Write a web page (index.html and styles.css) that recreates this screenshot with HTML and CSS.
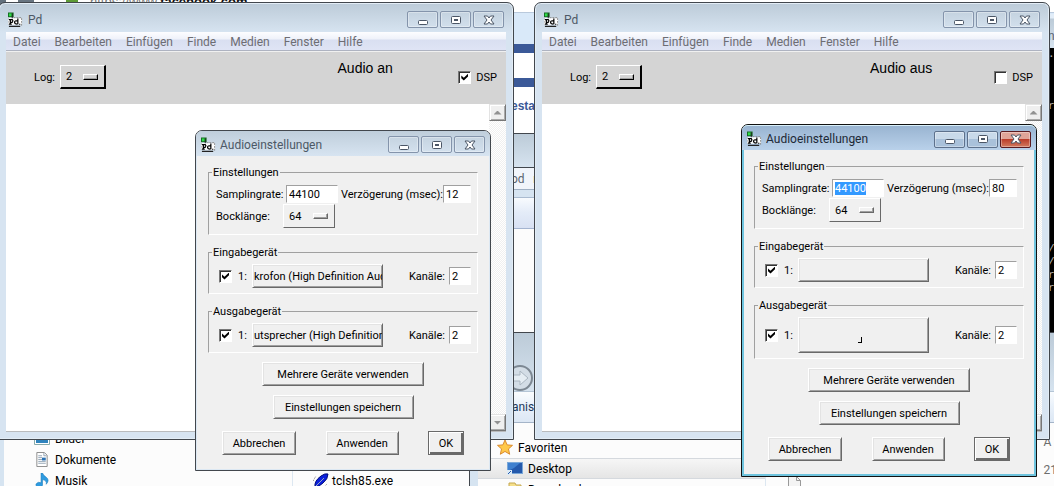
FILE: index.html
```html
<!DOCTYPE html>
<html lang="de">
<head>
<meta charset="utf-8">
<title>Pd – Audioeinstellungen</title>
<link rel="stylesheet" href="styles.css">
</head>
<body>
<svg class="defs" aria-hidden="true">
  <symbol id="pd" viewBox="0 0 16 16">
    <path d="M0 6h15v7H0z" fill="#fff"/><path d="M0 6v7M6 5.500h9M14.500 6v8" fill="none" stroke="#888" stroke-dasharray="2 1"/>
    <path d="M0 0h6v5H0z" fill="#176b22"/><path d="M1 1h3v3H1z" fill="#2fdc48"/>
    <path d="M4 1h1v5H4zM1 14h12v1.500H1z" fill="#222"/>
    <path d="M1 7.500h3.500q1.500 1.500 0 3H2.500M2.500 7.500v5M1 12.500h3M10.500 6.500v6M10 9q-3-.5-3 1.500t3 2M12.500 12v1" fill="none" stroke="#000" stroke-width="1.300"/>
  </symbol>
  <symbol id="min" viewBox="0 0 12 10"><rect x="1.500" y="5.500" width="9" height="4" rx="1" fill="#fff" stroke="#4b5666"/></symbol>
  <symbol id="max" viewBox="0 0 12 10"><rect x="1.500" y="1.500" width="9" height="7" rx="1" fill="#fff" stroke="#4b5666"/><rect x="4.500" y="4.500" width="3" height="1" fill="#ccd5df" stroke="#4b5666"/></symbol>
  <symbol id="close" viewBox="0 0 12 10"><path d="M1 1h3.500L6 3l1.500-2H11L8 5l3 4H7.500L6 7 4.500 9H1l3-4z" fill="#fff" stroke="#4b5666"/></symbol>
</svg>

<main class="desktop">
  <div class="browser">
    <div class="tabstrip"><span>https://www.</span><b>facebook.com</b></div>
    <div class="chrome"></div>
    <div class="brand"></div>
    <div class="page-gap"></div>
    <div class="brand"></div>
    <p class="page-text">esta</p>
  </div>
  <div class="back notes">
    <div class="back-title"></div>
    <div class="back-menu">od&nbsp;&nbsp; <b>n</b></div>
    <div class="back-bar"></div>
  </div>
  <div class="console"><div class="console-title">n</div><pre class="console-text">.-



r










/
/
r
r</pre></div>
  <div class="back explorer-right">
    <div class="back-title nav"><svg class="forward" viewBox="0 0 26 26"><circle cx="13" cy="13" r="12" fill="#d3dde6" stroke="#7d8893" stroke-width="2"/><path d="M4 10h9V6l8 7-8 7v-4H4z" fill="#e5edf3" stroke="#aab6c1"/></svg></div>
    <div class="organise">Organisieren</div>
    <div class="folder-view">
      <ul class="tree">
        <li><svg class="star" viewBox="0 0 16 16"><path d="M8 0l2.300 5.200 5.700.5-4.300 3.800 1.300 5.700L8 12.200 3 15.200l1.300-5.700L0 5.700l5.700-.5z" fill="#ffc84a" stroke="#d7862a"/></svg>Favoriten</li>
        <li class="chosen"><svg viewBox="0 0 16 13"><path d="M0 0h16v12H0z" fill="#79a7d8"/><path d="M1 1h14v10H1z" fill="#2459ac"/><path d="M1 1h12L7 6 1 9z" fill="#3f80cf"/><path d="M0 8h5v5H0z" fill="#dceaf5"/><path d="M1 12l3-3" stroke="#2459ac"/></svg>Desktop</li>
        <li class="deep"><svg viewBox="0 0 16 13"><path d="M2 0h6l1 2h5v11H2z" fill="#f5df8a" stroke="#c5a850"/></svg>Downloads</li>
      </ul>
      <div class="files"><svg class="sheet" viewBox="0 0 13 16"><path d="M.5.500h8l4 4v11H.500z" fill="#f4f4f4" stroke="#999"/><path d="M8.500.500v4h4" fill="none" stroke="#999"/></svg><p class="dates">Ä<br>21</p></div>
    </div>
  </div>
  <div class="explorer-left">
    <ul class="tree">
      <li><svg viewBox="0 0 16 13"><path d="M.5.500h15v12H.500z" fill="#fff" stroke="#8aa"/><path d="M2 2h12v9H2z" fill="#2f83bd"/></svg>Bilder</li>
      <li><svg viewBox="0 0 14 16"><path d="M1.500.500h8l3 3v12h-11z" fill="#fff" stroke="#888"/><path d="M9 1v3h3M3 4h4M3 6h4M3 8h4M3 10h8M3 12h8" fill="none" stroke="#91a3b3"/><path d="M7 6h4v3H7z" fill="#2a72b5"/></svg>Dokumente</li>
      <li><svg viewBox="0 0 14 16"><path d="M6 0h1.500q1 3 4 4.500 4 3 0 7.500 1-4-4-5v6a3.500 2.500 0 1 1-1.500-2.500z" fill="#2e9be0" stroke="#1677b8" stroke-width=".6"/></svg>Musik</li>
    </ul>
    <div class="files"><p class="file"><svg viewBox="0 0 16 16"><path d="M2 14Q1 8 8 3q4-3 7-2 0 5-5 9-4 4-8 4z" fill="#0b20dc" stroke="#000b78"/><path d="M1 15L11 5" stroke="#9ab"/><path d="M0 8l3-5M10 15l4-4" stroke="#777" stroke-dasharray="1 1"/></svg>tclsh85.exe</p></div>
  </div>

  <section class="window main-window first">
    <header class="titlebar"><svg class="app-icon"><use href="#pd"/></svg><h1>Pd</h1>
      <div class="caption-buttons"><button aria-label="Minimieren"><svg><use href="#min"/></svg></button><button aria-label="Maximieren"><svg><use href="#max"/></svg></button><button aria-label="Schließen"><svg><use href="#close"/></svg></button></div></header>
    <nav class="menubar"><button>Datei</button><button>Bearbeiten</button><button>Einfügen</button><button>Finde</button><button>Medien</button><button>Fenster</button><button>Hilfe</button></nav>
    <div class="toolbar">
      <label for="log1">Log:</label><span class="option"><select id="log1"><option>2</option></select><i class="knob"></i></span>
      <output class="status">Audio an</output>
      <label class="dsp"><input type="checkbox" checked>DSP</label>
    </div>
    <div class="console-area"><div class="scrollbar"><button aria-label="Nach oben"><i class="up"></i></button><button aria-label="Nach unten"><i class="down"></i></button></div></div>
  </section>

  <section class="window main-window second">
    <header class="titlebar"><svg class="app-icon"><use href="#pd"/></svg><h1>Pd</h1>
      <div class="caption-buttons"><button aria-label="Minimieren"><svg><use href="#min"/></svg></button><button aria-label="Maximieren"><svg><use href="#max"/></svg></button><button aria-label="Schließen"><svg><use href="#close"/></svg></button></div></header>
    <nav class="menubar"><button>Datei</button><button>Bearbeiten</button><button>Einfügen</button><button>Finde</button><button>Medien</button><button>Fenster</button><button>Hilfe</button></nav>
    <div class="toolbar">
      <label for="log2">Log:</label><span class="option"><select id="log2"><option>2</option></select><i class="knob"></i></span>
      <output class="status">Audio aus</output>
      <label class="dsp"><input type="checkbox">DSP</label>
    </div>
    <div class="console-area"><div class="scrollbar"><button aria-label="Nach oben"><i class="up"></i></button><button aria-label="Nach unten"><i class="down"></i></button></div></div>
  </section>

  <section class="window dialog inactive">
    <header class="titlebar"><svg class="app-icon"><use href="#pd"/></svg><h2>Audioeinstellungen</h2>
      <div class="caption-buttons"><button aria-label="Minimieren"><svg><use href="#min"/></svg></button><button aria-label="Maximieren"><svg><use href="#max"/></svg></button><button aria-label="Schließen"><svg><use href="#close"/></svg></button></div></header>
    <form class="settings">
      <fieldset><legend>Einstellungen</legend>
        <div class="row"><label class="key" for="rate1">Samplingrate:</label><input class="rate" id="rate1" value="44100"><label class="delay-label" for="delay1">Verzögerung (msec):</label><input class="delay" id="delay1" value="12"></div>
        <div class="row block"><label class="key" for="block1">Bocklänge:</label><span class="option"><select id="block1"><option>64</option></select><i class="knob"></i></span></div>
      </fieldset>
      <fieldset><legend>Eingabegerät</legend>
        <div class="row device"><label class="pick"><input type="checkbox" checked>1:</label><button type="button" class="button source">krofon (High Definition Aud</button><label class="channels">Kanäle:<input value="2"></label></div>
      </fieldset>
      <fieldset><legend>Ausgabegerät</legend>
        <div class="row device"><label class="pick"><input type="checkbox" checked>1:</label><button type="button" class="button source">utsprecher (High Definition</button><label class="channels">Kanäle:<input value="2"></label></div>
      </fieldset>
      <button type="button" class="button more">Mehrere Geräte verwenden</button>
      <button type="button" class="button save">Einstellungen speichern</button>
      <div class="actions"><button type="button" class="button">Abbrechen</button><button type="button" class="button">Anwenden</button><button type="button" class="button ok">OK</button></div>
    </form>
  </section>

  <section class="window dialog active">
    <header class="titlebar"><svg class="app-icon"><use href="#pd"/></svg><h2>Audioeinstellungen</h2>
      <div class="caption-buttons"><button aria-label="Minimieren"><svg><use href="#min"/></svg></button><button aria-label="Maximieren"><svg><use href="#max"/></svg></button><button class="danger" aria-label="Schließen"><svg><use href="#close"/></svg></button></div></header>
    <form class="settings">
      <fieldset><legend>Einstellungen</legend>
        <div class="row"><label class="key" for="rate2">Samplingrate:</label><input class="rate" id="rate2" value="44100"><label class="delay-label" for="delay2">Verzögerung (msec):</label><input class="delay" id="delay2" value="80"></div>
        <div class="row block"><label class="key" for="block2">Bocklänge:</label><span class="option"><select id="block2"><option>64</option></select><i class="knob"></i></span></div>
      </fieldset>
      <fieldset><legend>Eingabegerät</legend>
        <div class="row device"><label class="pick"><input type="checkbox" checked>1:</label><button type="button" class="button source" aria-label="Eingabegerät wählen"></button><label class="channels">Kanäle:<input value="2"></label></div>
      </fieldset>
      <fieldset><legend>Ausgabegerät</legend>
        <div class="row device"><label class="pick"><input type="checkbox" checked>1:</label><button type="button" class="button source tall" aria-label="Ausgabegerät wählen"><i class="corner"></i></button><label class="channels">Kanäle:<input value="2"></label></div>
      </fieldset>
      <button type="button" class="button more">Mehrere Geräte verwenden</button>
      <button type="button" class="button save">Einstellungen speichern</button>
      <div class="actions"><button type="button" class="button">Abbrechen</button><button type="button" class="button">Anwenden</button><button type="button" class="button ok">OK</button></div>
    </form>
  </section>
</main>
<script src="script.js"></script>
</body>
</html>
```
FILE: styles.css
```css
* { box-sizing: border-box; }
body { margin: 0; font: 11px/13px Roboto, "Noto Sans", sans-serif; color: #000; }
button, input, select { font: inherit; color: inherit; margin: 0; border-radius: 0; outline: 0; }
h1, h2, p, ul, pre { margin: 0; padding: 0; font: inherit; }
ul { list-style: none; }
.defs { display: none; }
.desktop { position: relative; min-height: 100vh; overflow: hidden; background: #fcfcfc; }

/* Windows behind */
.browser { position: absolute; inset: 0 0 auto 0; height: 134px; background: #fff; }
.tabstrip { height: 12px; padding-left: 90px; font: 13px/4px "Liberation Sans", sans-serif; color: #777; background: linear-gradient(90deg, #63717e 6px, transparent 6px 18px, #687581 18px 34px, transparent 34px 66px, #5d9b35 66px 78px, transparent 78px); }
.tabstrip b { color: #111; }
.chrome { height: 32px; background: #d9e9f9; border-top: 1px solid #b9c9dc; }
.brand { height: 9px; background: #3b5998; }
.page-gap { height: 25px; }
.page-text { padding: 12px 0 0 511px; font: bold 12px/14px "Liberation Sans", sans-serif; color: #3b5998; }
.back { position: absolute; border: 1px solid #42474d; background: #fcfcfc; }
.back-title { height: 34px; background: linear-gradient(#bccbd8, #d6e3ef); border-bottom: 1px solid #42474d; }
.notes { left: 400px; top: 133px; width: 200px; height: 210px; }
.back-menu { height: 22px; padding-left: 110px; font-size: 12px; line-height: 22px; color: #5b6571; background: #f1f5fb; border-bottom: 1px solid #9fb0c4; }
.back-menu b { color: #111; }
.back-bar { height: 39px; border-bottom: 1px solid #a4b4d0; background: linear-gradient(#d6e4f1 7px, #aabbd0 7px 8px, #f8fbfe 8px, #e4ecf8 22px, #d8e1f3); }
.console { position: absolute; right: 0; top: 14px; width: 20px; height: 320px; background: #000; }
.console-title { height: 34px; padding: 16px 0 0 14px; font-size: 12px; color: #5b6571; background: linear-gradient(#e2edf8 4px, #bccbd8 5px, #d6e3ef); }
.console-text { padding-left: 14px; font: 11px/13px "Liberation Mono", monospace; color: #bbb; }
.explorer-right { left: 470px; right: -8px; top: 332px; bottom: -8px; display: flex; flex-direction: column; border-left: 8px solid #d6e4f1; }
.nav { height: 64px; padding: 32px 0 0 29px; border-bottom: 1px solid #b4c5d6; }
.forward { width: 26px; height: 26px; display: block; }
.organise { height: 31px; padding-left: 15px; font-size: 12px; line-height: 30px; color: #1e395b; background: linear-gradient(#fafcfe, #e9f1fa 14px, #dce7f4); border-bottom: 1px solid #a4b4c8; }
.folder-view { flex: 1; display: grid; grid-template-columns: 287px 1fr; }
.tree { font-size: 12px; line-height: 20px; }
.tree li { display: flex; align-items: center; gap: 5px; height: 21px; white-space: nowrap; }
.tree svg { width: 16px; height: 15px; flex: none; }
.explorer-right .tree { padding-top: 9px; }
.explorer-right .tree li { padding-left: 19px; }
.explorer-right .tree li.chosen { padding-left: 29px; background: linear-gradient(#f6f6f6, #e5e5e5); border: 1px solid #d5d9de; border-width: 1px 0; }
.explorer-right .tree li.deep { padding-left: 29px; }
.explorer-right .folder-view { padding-top: 5px; }
.files { display: flex; border-left: 1px solid #dce7f1; }
.explorer-right .files { justify-content: space-between; padding: 0 4px 0 22px; }
.sheet { width: 13px; height: 16px; margin-top: 48px; }
.dates { font-size: 12px; line-height: 28px; color: #6d6d6d; }
.explorer-left { position: absolute; left: 0; top: 428px; bottom: -8px; width: 470px; display: grid; grid-template-columns: 288px 1fr; background: #fcfcfc; border-left: 4px solid #d6e4f1; border-right: 1px solid #42474d; }
.explorer-left .tree { padding-left: 30px; }
.file { display: flex; gap: 3px; align-items: center; height: 20px; margin: 43px 0 0 20px; font-size: 12px; }
.file svg { width: 16px; height: 16px; }

/* Window frame */
.window { position: absolute; display: flex; flex-direction: column; border: 1px solid #42474d; border-radius: 7px 7px 0 0; }
.main-window { top: 2px; width: 516px; height: 438px; padding: 0 7px 7px; background: linear-gradient(#bccbd8, #d7e4f1 30px); box-shadow: inset 0 0 0 1px #e3edf6; }
.first { left: -2px; }
.second { left: 534px; }
.titlebar { display: flex; align-items: center; flex: none; height: 29px; padding: 4px 2px 0; font-size: 12px; line-height: 16px; color: #4d5966; }
.app-icon { width: 15px; height: 16px; margin-right: 5px; }
.caption-buttons { display: flex; gap: 2px; margin-left: auto; }
.caption-buttons button { width: 31px; height: 17px; padding: 0; display: flex; align-items: center; justify-content: center; border: 1px solid #8494ab; border-radius: 2px; background: transparent; box-shadow: inset 0 0 0 1px #ffffff55; }
.caption-buttons svg { width: 12px; height: 10px; }
.menubar { display: flex; gap: 14px; flex: none; height: 20px; padding: 0 7px; background: linear-gradient(#fdfdff, #eff2fa 7px, #d9dff1 8px, #dfe4f5 18px, #aeb3c1 18px, #aeb3c1 19px, #f0f0f0 19px); }
.menubar button { padding: 0; border: 0; background: none; font-size: 12px; line-height: 18px; color: #6d6d73; }
.toolbar { display: flex; align-items: center; flex: none; height: 52px; padding: 0 9px 2px 28px; background: #d4d4d4; }
.toolbar .option { width: 46px; height: 24px; margin-left: 5px; border-color: #fff #000 #000 #fff; border-width: 1px 2px 2px 1px; }
.status { flex: 1; align-self: flex-start; padding: 8px 0 0 166px; text-align: center; font: 14px/16px "Liberation Sans", Arial, sans-serif; }
.dsp { display: flex; align-items: center; gap: 5px; }
.console-area { flex: 1; display: flex; justify-content: flex-end; background: #fff; border-bottom: 1px solid #b9bbbd; }
.scrollbar { width: 17px; display: flex; flex-direction: column; justify-content: space-between; background: repeating-conic-gradient(#fff 0 25%, #f0f0f0 0 50%) 0 0 / 2px 2px; }
.scrollbar button { width: 17px; height: 17px; padding: 0; display: grid; place-items: center; background: #efefef; border: 1px solid; border-color: #e3e3e3 #777 #777 #e3e3e3; box-shadow: inset 1px 1px #fff, inset -1px -1px #aaa; }
.up, .down { width: 8px; height: 4px; background: #929292; clip-path: polygon(50% 0, 100% 100%, 0 100%); }
.down { clip-path: polygon(0 0, 100% 0, 50% 100%); }

/* Controls */
.option { display: flex; align-items: center; width: 52px; height: 24px; border: 1px solid; border-color: #fff #696969 #696969 #fff; padding: 0 6px 0 5px; }
.option select { flex: 1; min-width: 0; padding: 0; border: 0; appearance: none; background: none; }
.knob { width: 15px; height: 6px; background: #f2f2f2; border: 1px solid; border-color: #fff #696969 #696969 #fff; box-shadow: inset -1px -1px #a0a0a0; }
.toolbar .knob { background: #d4d4d4; border-color: #fff #000 #000 #fff; }
input[type="checkbox"] { appearance: none; flex: none; width: 13px; height: 13px; display: grid; place-items: center; background: #fff; border: 1px solid; border-color: #777 #fff #fff #777; box-shadow: inset 1px 1px #333; }
input[type="checkbox"]:checked::before { content: ""; width: 7px; height: 7px; background: #000; clip-path: polygon(0 29%, 36% 60%, 100% 0, 100% 40%, 36% 100%, 0 68%); }
input:not([type="checkbox"]) { height: 18px; padding: 0 0 0 2px; background: #fff; border: 1px solid; border-color: #a0a0a0 #fff #fff #a0a0a0; }
input::selection { background: #3399ff; color: #fff; }
.button { height: 24px; padding: 0; border: 1px solid; border-color: #fff #696969 #696969 #fff; background: #f0f0f0; box-shadow: inset 1px 1px #e3e3e3, inset -1px -1px #a0a0a0; white-space: nowrap; }

/* Settings dialogs */
.dialog { width: 296px; padding: 0 5px 15px; background: #f0f0f0; }
.dialog .titlebar { height: 25px; margin: 0 -5px; padding: 2px 5px 0; border-radius: 6px 6px 0 0; background: linear-gradient(#bfcedb, #d7e4f1); }
.dialog .app-icon { margin-right: 4px; }
.inactive { left: 195px; top: 130px; box-shadow: inset 0 0 0 1px #dce8f3; }
.active { left: 741px; top: 124px; border-color: #111; box-shadow: inset 0 0 0 2px #6fc4de; }
.active .titlebar { background: linear-gradient(#99b4d1, #b9d1ea); color: #1d2936; border-top: 1px solid #d9f0fa; }
.active .caption-buttons button { border-color: #5d718c; background: linear-gradient(#c9daea 50%, #a9c1da 50%); }
.active .caption-buttons button.danger { border-color: #5a1a20; background: linear-gradient(#e0a498 50%, #bb3e2b 50%, #d27a5f); }
.settings { display: flex; flex-direction: column; align-items: center; padding: 10px 7px 0; }
fieldset { width: 100%; min-width: 0; margin: 0 0 11px; padding: 6px 6px 6px 7px; border: 1px solid; border-color: #a0a0a0 #fff #fff #a0a0a0; }
legend { margin-left: -4px; padding: 0 1px; }
.row { display: flex; align-items: center; }
.key { width: 70px; white-space: nowrap; }
.rate { width: 52px; }
.delay-label { flex: 1; padding-left: 3px; white-space: nowrap; }
.delay { width: 28px; }
.row.block { padding-top: 1px; }
.block .key { width: 67px; }
.device { margin: -1px 0; }
.pick { display: flex; align-items: center; gap: 6px; width: 36px; padding-left: 3px; }
.source { width: 131px; display: flex; align-items: center; padding-left: 1px; overflow: hidden; }
.tall { height: 36px; }
.corner { width: 4px; height: 6px; margin: 9px 0 0 58px; border: 1px solid #000; border-width: 0 1px 1px 0; }
.channels { display: flex; align-items: center; gap: 4px; margin-left: auto; }
.channels input { width: 22px; }
.more { width: 162px; margin: -2px 0 9px; }
.save { width: 141px; }
.actions { width: 100%; display: grid; grid-template-columns: 74px 73px 36px; justify-content: space-between; padding: 12px 14px 0 14px; }
.ok { border: 1px solid #696969; box-shadow: inset 1px 1px #fff, inset -2px -2px #696969; }
```
FILE: script.js
```js
const rate = document.getElementById("rate2");
rate.focus();
rate.select();
```
